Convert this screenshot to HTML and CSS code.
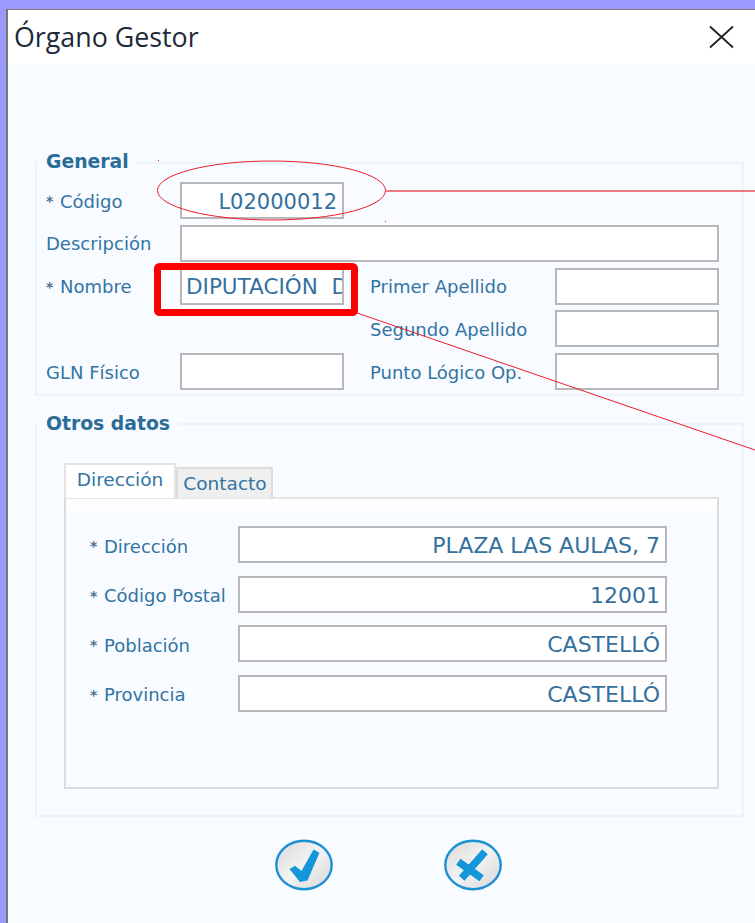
FILE: index.html
```html
<!DOCTYPE html>
<html lang="es">
<head>
<meta charset="utf-8">
<title>Órgano Gestor</title>
<link rel="stylesheet" href="styles.css">
</head>
<body>
<div class="dialog">
  <header class="dialog-head">
    <h1>Órgano Gestor</h1>
    <svg class="close" width="26" height="24" viewBox="0 0 26 24"><path d="M2 1.500 L25 22.500 M25 1.500 L2 22.500" stroke="#222" stroke-width="1.800" fill="none"/></svg>
  </header>
  <main class="dialog-body">
    <section class="group group-general">
      <h2>General</h2>
      <div class="form-grid">
        <label class="req">Código</label>
        <div class="field value-code">L02000012</div>
        <span></span><span></span>

        <label>Descripción</label>
        <div class="field span3"></div>

        <label class="req">Nombre</label>
        <div class="field value-clip">DIPUTACIÓN DE CASTELLÓN</div>
        <label class="mid">Primer Apellido</label>
        <div class="field"></div>

        <span></span><span></span>
        <label class="mid">Segundo Apellido</label>
        <div class="field"></div>

        <label>GLN Físico</label>
        <div class="field"></div>
        <label class="mid">Punto Lógico Op.</label>
        <div class="field"></div>
      </div>
    </section>

    <section class="group group-other">
      <h2>Otros datos</h2>
      <div class="tabs">
        <div class="tab tab-on">Dirección</div>
        <div class="tab">Contacto</div>
      </div>
      <div class="tab-panel">
        <div class="address-grid">
          <label class="req">Dirección</label>
          <div class="field value-right">PLAZA LAS AULAS, 7</div>
          <label class="req">Código Postal</label>
          <div class="field value-right">12001</div>
          <label class="req">Población</label>
          <div class="field value-right">CASTELLÓ</div>
          <label class="req">Provincia</label>
          <div class="field value-right">CASTELLÓ</div>
        </div>
      </div>
    </section>

    <div class="actions">
      <svg class="round-btn" width="58" height="52" viewBox="0 0 58 52">
        <defs>
          <linearGradient id="btnFace" x1="0" y1="0" x2="1" y2="1">
            <stop offset="0" stop-color="#d8d8d8"/>
            <stop offset="0.5" stop-color="#f3f3f3"/>
            <stop offset="1" stop-color="#d4d4d4"/>
          </linearGradient>
        </defs>
        <ellipse cx="29" cy="26" rx="27.700" ry="24.200" fill="url(#btnFace)" stroke="#1b90d2" stroke-width="2.400"/>
        <path d="M14.500 30 L20 26.700 L26.500 32 L38.500 10.500 L44.500 13.700 L32.500 41.500 L25 43 Z" fill="#1496da"/>
      </svg>
      <svg class="round-btn" width="58" height="52" viewBox="0 0 58 52">
        <ellipse cx="29" cy="26" rx="27.700" ry="24.200" fill="url(#btnFace)" stroke="#1b90d2" stroke-width="2.400"/>
        <path d="M14.300 22.700 L37.700 39.300 M41 12.700 L17.700 39.300" fill="none" stroke="#1496da" stroke-width="7.500"/>
      </svg>
    </div>
  </main>

  <!-- Red call-outs drawn on top of the form -->
  <svg class="callouts" width="755" height="923" viewBox="0 0 755 923">
    <ellipse cx="271.500" cy="190.500" rx="114" ry="29.500" fill="none" stroke="#f01c28" stroke-width="1"/>
    <path d="M385 191 H755" stroke="#f0505a" stroke-width="1.400" fill="none"/>
    <path d="M357 313 L755 450" stroke="#f01c28" stroke-width="1" fill="none"/>
    <rect x="157.500" y="266.500" width="197" height="46" rx="2" fill="none" stroke="#fe0000" stroke-width="7"/>
    <path d="M158 160.500 h1 M385 221.500 h1" stroke="#f01c28" stroke-width="1"/>
  </svg>
</div>
</body>
</html>
```
FILE: styles.css
```css
* { box-sizing: border-box; }

html, body { margin: 0; height: 100%; }

body {
  background: #9999ff;
  padding: 9px 0 0 6px;
  overflow: hidden;
  font-family: "DejaVu Sans", sans-serif;
  color: #3274a3;
}

.dialog {
  width: 749px;
  height: 914px;
  background: #f8fbff;
  border: 1px solid #77776f;
  border-right: 0;
  border-bottom: 0;
  border-left-width: 2px;
}

.dialog-head {
  height: 54px;
  background: #fff;
  display: flex;
  justify-content: space-between;
  align-items: center;
  padding: 0 21px 0 6px;
}

.dialog-head h1 {
  margin: -2px 0 0;
  font: 400 26.800px "Open Sans", sans-serif;
  color: #1c2a3a;
}

.dialog-body { padding: 98px 11px 0 27px; }

.group {
  position: relative;
  border: 2px solid #ecf3fa;
}

.group h2 {
  position: absolute;
  left: 1px;
  top: -13px;
  margin: 0;
  padding: 0 8px;
  background: #f8fbff;
  font-size: 18.800px;
  line-height: 22px;
  font-weight: 700;
  color: #2b6c99;
}

.group-other h2 { top: -12px; }

.group-general { height: 234px; padding: 18px 23px 0 8px; }

.form-grid {
  display: grid;
  grid-template-columns: 135px 164px 211px 164px;
  grid-auto-rows: 37px;
  row-gap: 5.750px;
  font-size: 18px;
}

.form-grid label, .address-grid label {
  display: flex;
  align-items: center;
  white-space: nowrap;
}

.form-grid label { padding: 1px 0 0 1px; }

.form-grid .mid { padding-left: 26px; }

.req::before {
  content: "*";
  width: 14px;
  font-size: 14px;
  font-weight: 700;
  color: #4b6f8e;
}

.field {
  background: #fff;
  border: 2px solid #b8b8bc;
  line-height: 36px;
  padding: 0 5px;
  color: #34709e;
  white-space: nowrap;
  overflow: hidden;
}

.span3 { grid-column: 2 / 5; }

.value-code { text-align: right; font-size: 21px; }
.value-right { text-align: right; font-size: 22px; }
.value-clip { font-size: 21.500px; word-spacing: 7px; padding-left: 4px; line-height: 34px; }

.group-other { height: 394px; margin-top: 27px; padding: 37px 23px 0 27px; }

.tabs {
  display: flex;
  align-items: flex-end;
  height: 36px;
  position: relative;
  z-index: 1;
  font-size: 18.500px;
}

.tab {
  height: 31px;
  width: 97px;
  background: #efefef;
  border: 2px solid #dcdcdc;
  border-bottom: 0;
  text-align: center;
  line-height: 29px;
  padding-left: 1px;
}

.tab-on {
  height: 35px;
  width: 112px;
  background: #fff;
  border-color: #e3e3e3;
  line-height: 30px;
  padding-left: 0;
}

.tab-panel {
  height: 292px;
  margin-top: -1px;
  border: 2px solid #dcdcdc;
  border-top-color: #e4e4e4;
  background: linear-gradient(#fff 0, #f8fbff 18px);
  padding: 27px 50px 0 24px;
}

.address-grid {
  display: grid;
  grid-template-columns: 148px 1fr;
  grid-auto-rows: 37px;
  row-gap: 12.500px;
  font-size: 18px;
}

.address-grid label { padding-top: 3px; }

.actions {
  display: flex;
  gap: 111px;
  padding: 22px 0 0 240px;
}

.callouts {
  position: absolute;
  left: 0;
  top: 0;
  pointer-events: none;
}
```
